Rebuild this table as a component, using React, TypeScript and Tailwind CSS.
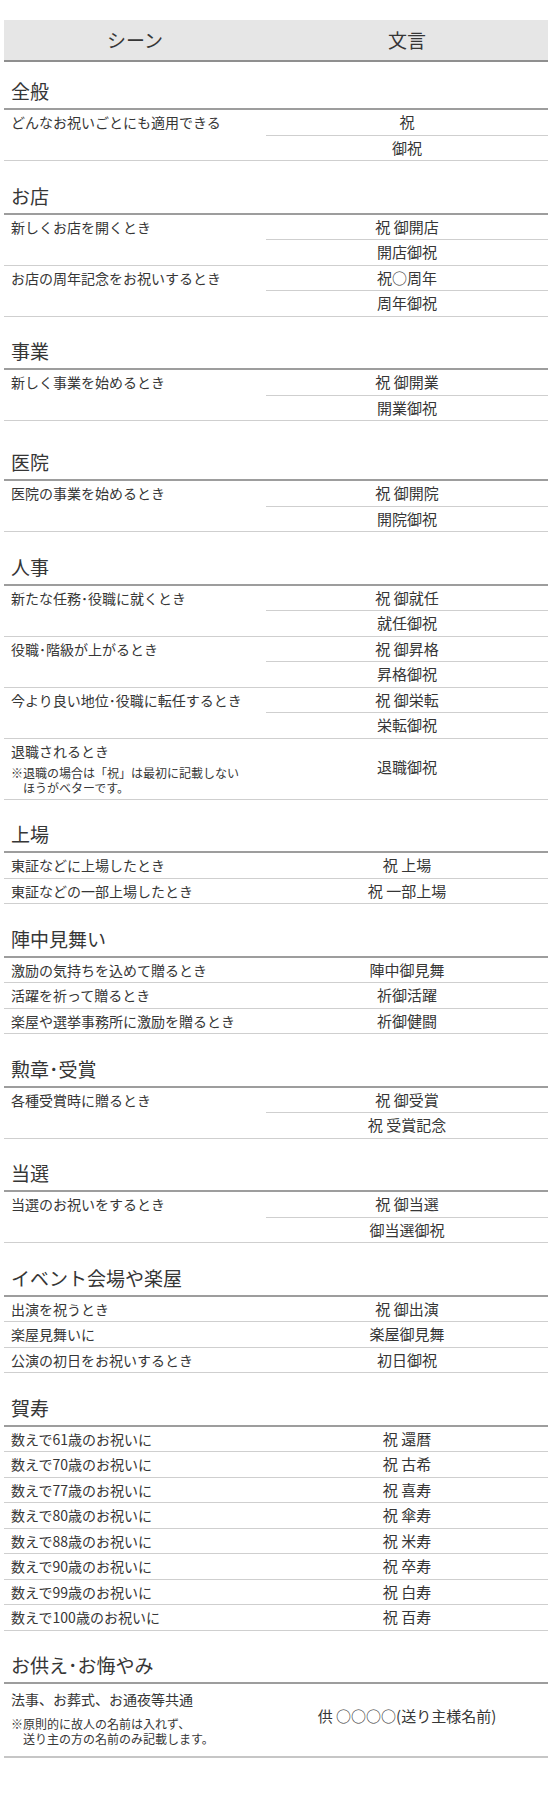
import clsx from 'clsx';

interface Group {
  scene: string;
  note?: string[];
  words: string[];
}

interface Section {
  title: string;
  wide?: boolean;
  last?: boolean;
  groups: Group[];
}

const sections: Section[] = [
  {
    title: '全般',
    groups: [{ scene: 'どんなお祝いごとにも適用できる', words: ['祝', '御祝'] }],
  },
  {
    title: 'お店',
    groups: [
      { scene: '新しくお店を開くとき', words: ['祝 御開店', '開店御祝'] },
      { scene: 'お店の周年記念をお祝いするとき', words: ['祝○周年', '周年御祝'] },
    ],
  },
  {
    title: '事業',
    groups: [{ scene: '新しく事業を始めるとき', words: ['祝 御開業', '開業御祝'] }],
  },
  {
    title: '医院',
    wide: true,
    groups: [{ scene: '医院の事業を始めるとき', words: ['祝 御開院', '開院御祝'] }],
  },
  {
    title: '人事',
    groups: [
      { scene: '新たな任務･役職に就くとき', words: ['祝 御就任', '就任御祝'] },
      { scene: '役職･階級が上がるとき', words: ['祝 御昇格', '昇格御祝'] },
      { scene: '今より良い地位･役職に転任するとき', words: ['祝 御栄転', '栄転御祝'] },
      {
        scene: '退職されるとき',
        note: ['※退職の場合は「祝」は最初に記載しない', 'ほうがベターです。'],
        words: ['退職御祝'],
      },
    ],
  },
  {
    title: '上場',
    groups: [
      { scene: '東証などに上場したとき', words: ['祝 上場'] },
      { scene: '東証などの一部上場したとき', words: ['祝 一部上場'] },
    ],
  },
  {
    title: '陣中見舞い',
    groups: [
      { scene: '激励の気持ちを込めて贈るとき', words: ['陣中御見舞'] },
      { scene: '活躍を祈って贈るとき', words: ['祈御活躍'] },
      { scene: '楽屋や選挙事務所に激励を贈るとき', words: ['祈御健闘'] },
    ],
  },
  {
    title: '勲章･受賞',
    groups: [{ scene: '各種受賞時に贈るとき', words: ['祝 御受賞', '祝 受賞記念'] }],
  },
  {
    title: '当選',
    groups: [{ scene: '当選のお祝いをするとき', words: ['祝 御当選', '御当選御祝'] }],
  },
  {
    title: 'イベント会場や楽屋',
    groups: [
      { scene: '出演を祝うとき', words: ['祝 御出演'] },
      { scene: '楽屋見舞いに', words: ['楽屋御見舞'] },
      { scene: '公演の初日をお祝いするとき', words: ['初日御祝'] },
    ],
  },
  {
    title: '賀寿',
    groups: [
      { scene: '数えで61歳のお祝いに', words: ['祝 還暦'] },
      { scene: '数えで70歳のお祝いに', words: ['祝 古希'] },
      { scene: '数えで77歳のお祝いに', words: ['祝 喜寿'] },
      { scene: '数えで80歳のお祝いに', words: ['祝 傘寿'] },
      { scene: '数えで88歳のお祝いに', words: ['祝 米寿'] },
      { scene: '数えで90歳のお祝いに', words: ['祝 卒寿'] },
      { scene: '数えで99歳のお祝いに', words: ['祝 白寿'] },
      { scene: '数えで100歳のお祝いに', words: ['祝 百寿'] },
    ],
  },
  {
    title: 'お供え･お悔やみ',
    last: true,
    groups: [
      {
        scene: '法事、お葬式、お通夜等共通',
        note: ['※原則的に故人の名前は入れず、', '送り主の方の名前のみ記載します。'],
        words: ['供 ○○○○(送り主様名前)'],
      },
    ],
  },
];

function GroupRow({ group, last }: { group: Group; last?: boolean }) {
  const { scene, note, words } = group;

  if (note) {
    return (
      <div
        className={clsx(
          'grid grid-cols-[262px_1fr]',
          last ? 'border-b-2 border-[#c6c6c6] pt-[3px] pb-[10.5px]' : 'border-b border-[#cfcfcf] pb-[3.5px]',
        )}
      >
        <div className="pl-[7px]">
          <div className="text-[14px] leading-[24.5px]">{scene}</div>
          <div className={clsx('text-[12px] leading-[15px]', last ? 'mt-[4px]' : 'mt-[2px]')}>
            <div>{note[0]}</div>
            <div className="pl-[1em]">{note[1]}</div>
          </div>
        </div>
        <div className="flex items-center justify-center text-[15px]">{words[0]}</div>
      </div>
    );
  }

  return (
    <div className="grid grid-cols-[262px_1fr] border-b border-[#cfcfcf]">
      <div className="pl-[7px] text-[14px] leading-[24.5px]">{scene}</div>
      <div className="flex flex-col">
        {words.map((w, i) => (
          <div
            key={w}
            className={clsx(
              'flex items-center justify-center text-[15px]',
              i < words.length - 1 ? 'h-[25.5px] border-b border-[#cfcfcf]' : 'h-[24.5px]',
            )}
          >
            {w}
          </div>
        ))}
      </div>
    </div>
  );
}

export default function App() {
  return (
    <div className="min-h-[1813px] bg-white pt-[20px] text-[#363636] font-['Noto_Sans_CJK_JP','Noto_Sans_CJK_SC',sans-serif]">
      <div className="ml-[4px] w-[544px]">
        {/* header */}
        <div className="grid h-[42px] grid-cols-[262px_1fr] items-center border-b-2 border-[#8f8f8f] bg-[#e6e6e6] text-[19px]">
          <div className="text-center">シーン</div>
          <div className="text-center">文言</div>
        </div>

        {sections.map((s, si) => (
          <section key={s.title} className={clsx(si === 0 ? 'mt-[16px]' : s.wide ? 'mt-[28px]' : 'mt-[21.5px]')}>
            <h2 className="border-b-2 border-[#9d9d9d] pb-[4px] pl-[7px] text-[19px] font-normal leading-[26px]">
              {s.title}
            </h2>
            {s.groups.map((g) => (
              <GroupRow key={g.scene} group={g} last={s.last} />
            ))}
          </section>
        ))}
      </div>
    </div>
  );
}
